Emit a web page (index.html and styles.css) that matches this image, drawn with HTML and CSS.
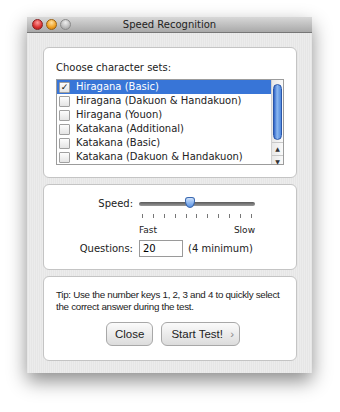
FILE: index.html
```html
<!DOCTYPE html>
<html lang="en">
<head>
    <meta charset="UTF-8">
    <title>Speed Recognition</title>
    <link rel="stylesheet" href="styles.css">
</head>
<body>
    <div class="window">
        <div class="titlebar">
            <div class="lights">
                <span class="light red"></span>
                <span class="light orange"></span>
                <span class="light grey"></span>
            </div>
            <div class="title">Speed Recognition</div>
        </div>

        <div class="content">
            <!-- Character sets -->
            <div class="panel sets">
                <div class="label">Choose character sets:</div>
                <div class="listbox">
                    <ul class="list">
                        <li class="selected"><span class="check on">&#10003;</span>Hiragana (Basic)</li>
                        <li><span class="check"></span>Hiragana (Dakuon &amp; Handakuon)</li>
                        <li><span class="check"></span>Hiragana (Youon)</li>
                        <li><span class="check"></span>Katakana (Additional)</li>
                        <li><span class="check"></span>Katakana (Basic)</li>
                        <li><span class="check"></span>Katakana (Dakuon &amp; Handakuon)</li>
                    </ul>
                    <div class="scrollbar">
                        <div class="track"><div class="thumb"></div></div>
                        <div class="arrow">&#9650;</div>
                        <div class="arrow">&#9660;</div>
                    </div>
                </div>
            </div>

            <!-- Speed / questions -->
            <div class="panel settings">
                <div class="row speed-row">
                    <span class="field-label">Speed:</span>
                    <div class="slider">
                        <div class="rail"></div>
                        <div class="knob"></div>
                        <div class="ticks">
                            <i></i><i></i><i></i><i></i><i></i><i></i><i></i><i></i><i></i><i></i><i></i>
                        </div>
                        <div class="ends"><span>Fast</span><span>Slow</span></div>
                    </div>
                </div>
                <div class="row">
                    <span class="field-label">Questions:</span>
                    <input class="num" type="text" value="20">
                    <span class="hint">(4 minimum)</span>
                </div>
            </div>

            <!-- Tip and buttons -->
            <div class="panel tip">
                <p class="tip-text">Tip: Use the number keys 1, 2, 3 and 4 to quickly select<br>the correct answer during the test.</p>
                <div class="buttons">
                    <button class="btn">Close</button>
                    <button class="btn start">Start Test! <span class="chev">&#8250;</span></button>
                </div>
            </div>
        </div>
    </div>
</body>
</html>
```

FILE: styles.css
```css
body {
    margin: 0;
    width: 340px;
    height: 412px;
    background: #fff;
    font-family: 'DejaVu Sans', sans-serif;
    font-size: 10px;
    color: #222;
    overflow: hidden;
}

.window {
    margin: 17px 0 0 27px;
    width: 285px;
    height: 356px;
    background: repeating-linear-gradient(90deg, #e6e6e6 0, #e6e6e6 1px, #ececec 1px, #ececec 2px);
    box-shadow: 0 8px 18px rgba(0, 0, 0, 0.45);
    display: flex;
    flex-direction: column;
}

.titlebar {
    height: 15px;
    background: linear-gradient(#d8d8d8, #a9a9a9);
    border-bottom: 1px solid #777;
    display: flex;
    align-items: center;
    position: relative;
}

.lights {
    display: flex;
    gap: 3px;
    padding-left: 5px;
}

.light {
    width: 11px;
    height: 11px;
    border-radius: 50%;
    box-sizing: border-box;
}

.light.red {
    background: radial-gradient(circle at 50% 30%, #ff9a9a, #d8302e 60%, #a81a1a);
    border: 1px solid #8a2020;
}

.light.orange {
    background: radial-gradient(circle at 50% 30%, #ffe0a0, #f0a020 60%, #c07010);
    border: 1px solid #9a6010;
}

.light.grey {
    background: radial-gradient(circle at 50% 30%, #eee, #bbb 60%, #999);
    border: 1px solid #8a8a8a;
}

.title {
    position: absolute;
    left: 0;
    right: 0;
    text-align: center;
    font-size: 10px;
    color: #222;
}

.content {
    padding: 14px 15px 0 16px;
    display: flex;
    flex-direction: column;
    gap: 6px;
}

.panel {
    background: #fff;
    border: 1px solid #c4c4c4;
    border-radius: 6px;
    box-sizing: border-box;
    width: 254px;
}

/* Character set list */
.sets {
    height: 131px;
    padding: 13px 12px 0 12px;
}

.label {
    line-height: 14px;
    margin-bottom: 4px;
}

.listbox {
    display: flex;
    border: 1px solid #9c9c9c;
    height: 86px;
    box-sizing: border-box;
}

.list {
    list-style: none;
    margin: 0;
    padding: 0;
    flex: 1;
}

.list li {
    height: 14px;
    line-height: 14px;
    display: flex;
    align-items: center;
    white-space: nowrap;
}

.list li.selected {
    background: #3875d7;
    color: #fff;
}

.check {
    width: 9px;
    height: 9px;
    border: 1px solid #a0a0a0;
    border-radius: 1px;
    background: linear-gradient(#fdfdfd, #e4e4e4);
    margin: 0 6px 0 2px;
    font-size: 9px;
    line-height: 9px;
    color: #111;
    text-align: center;
    box-sizing: content-box;
}

.check.on {
    font-weight: bold;
}

.scrollbar {
    width: 11px;
    border-left: 1px solid #d0d0d0;
    background: linear-gradient(90deg, #e8e8e8, #fafafa);
    display: flex;
    flex-direction: column;
}

.track {
    flex: 1;
    padding: 4px 1px 2px 1px;
}

.thumb {
    height: 54px;
    border-radius: 5px;
    background: linear-gradient(90deg, #2f64c8, #8cb8f0 45%, #4f88de);
    border: 1px solid #2a56a8;
}

.arrow {
    height: 12px;
    font-size: 6px;
    line-height: 12px;
    text-align: center;
    color: #333;
    border-top: 1px solid #c8c8c8;
}

/* Speed settings */
.settings {
    height: 86px;
    padding: 12px 0 0 0;
}

.row {
    display: flex;
    align-items: center;
}

.field-label {
    width: 89px;
    text-align: right;
    margin-right: 6px;
}

.speed-row {
    align-items: flex-start;
    height: 43px;
}

.speed-row .field-label {
    line-height: 14px;
}

.slider {
    position: relative;
    width: 116px;
}

.rail {
    margin-top: 5px;
    height: 4px;
    border-radius: 2px;
    background: linear-gradient(#5a5a5a, #9a9a9a);
}

.knob {
    position: absolute;
    left: 46px;
    top: 0;
    width: 10px;
    height: 11px;
    background: linear-gradient(#cfe2fb, #5a94e6);
    border: 1px solid #3a68b0;
    border-radius: 3px 3px 5px 5px / 3px 3px 7px 7px;
    box-sizing: border-box;
}

.ticks {
    display: flex;
    justify-content: space-between;
    padding: 0 3px;
    margin-top: 8px;
}

.ticks i {
    width: 1px;
    height: 4px;
    background: #777;
}

.ends {
    display: flex;
    justify-content: space-between;
    margin-top: 7px;
    font-size: 9px;
}

.num {
    width: 44px;
    height: 17px;
    box-sizing: border-box;
    border: 1px solid #9a9a9a;
    font-family: inherit;
    font-size: 10px;
    padding: 0 3px;
    margin: 0 5px 0 0;
}

/* Tip */
.tip {
    height: 85px;
    padding: 12px 4px 0 12px;
}

.tip-text {
    margin: 0;
    font-family: 'Liberation Sans', sans-serif;
    font-size: 9.8px;
    letter-spacing: -0.3px;
    line-height: 12px;
    white-space: nowrap;
}

.buttons {
    display: flex;
    justify-content: center;
    gap: 8px;
    margin-top: 9px;
    padding-right: 2px;
}

.btn {
    height: 24px;
    padding: 0 8px;
    border: 1px solid #a8a8a8;
    border-radius: 6px;
    background: linear-gradient(#fbfbfb, #dcdcdc);
    font-family: 'Liberation Sans', sans-serif;
    font-size: 11.5px;
    color: #222;
}

.btn.start {
    padding: 0 5px 0 9px;
}

.chev {
    color: #888;
    margin-left: 4px;
}
```
